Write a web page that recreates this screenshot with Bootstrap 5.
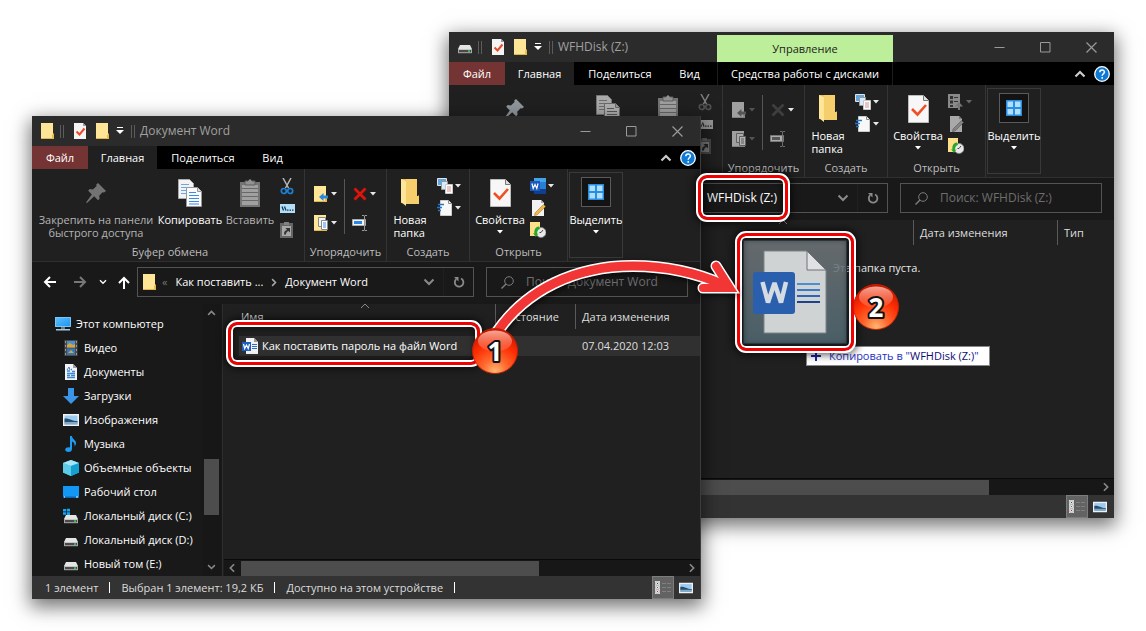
<!DOCTYPE html>
<html lang="ru">
<head>
<meta charset="utf-8">
<meta name="viewport" content="width=device-width, initial-scale=1">
<title>Проводник</title>
<link href="https://cdn.jsdelivr.net/npm/bootstrap@5.3.0/dist/css/bootstrap.min.css" rel="stylesheet">
<style>
  body { margin: 0; background: #fff; font: 11px/16px "Open Sans", "Noto Sans", sans-serif; color: #e8e8e8; }
  button { background: none; border: 0; padding: 0; color: inherit; font: inherit; }
  svg { display: block; flex: none; }
  .desktop { min-height: 100vh; overflow: hidden; }
  .win { background: #202020; box-shadow: 0 6px 18px 2px rgba(0,0,0,.55); }
  .win-front { left: 32px; top: 116px; width: 669px; border-right: 1px solid #3c3c3c; }
  .win-back { left: 449px; top: 32px; width: 665px; }
  .titlebar { height: 30px; background: #2b2b2b; }
  .quick { width: 268px; padding-left: 8px; color: #a0a0a0; font-size: 12px; }
  .bars { width: 4px; height: 13px; border: 1px solid #5c5c5c; border-width: 0 1px; }
  .ms4 { margin-left: 4px; }
  .ms5 { margin-left: 5px; }
  .ms7 { margin-left: 7px; }
  .ms8 { margin-left: 8px; }
  .manage { width: 176px; height: 27px; background: #bdee99; color: #222; }
  .sysbtn { width: 46px; height: 30px; }
  .tabs { height: 23px; background: #000; color: #fff; }
  .tabs button { height: 23px; }
  .t-file { width: 56px; background: #753434; }
  .t-home { width: 69px; background: #202020; }
  .t-share { width: 92px; }
  .t-view { width: 47px; }
  .t-disk { width: 176px; margin-left: 4px; border: 1px solid #1c1c1c !important; border-width: 0 1px !important; }
  .ribbon { height: 93px; border-bottom: 1px solid #303030; background: #202020; }
  .grp { height: 92px; border-right: 1px solid #343434; }
  .grp-body { height: 75px; }
  .g1 { width: 273px; padding-left: 4px; } .g2 { width: 82px; } .g3 { width: 83px; } .g4 { width: 98px; }
  .win-back .g1 { width: 274px; padding-left: 5px; }
  .cap { color: #bdbdbd; }
  .big { line-height: 13px; padding-top: 8px; color: #fff; white-space: nowrap; display: flex; flex-direction: column; align-items: center; }
  .big .pic { height: 36px; padding-top: 2px; display: block; }
  .w120 { width: 120px; } .w68 { width: 68px; } .w52 { width: 52px; } .w22 { width: 22px; } .w46 { width: 46px; } .w60 { width: 60px; }
  .dim { color: #b4b4b4; }
  .small3 { padding-top: 6px; } .small3 > * { height: 22px; }
  .small2 { padding-top: 10px; } .small2 > * { height: 29px; }
  .small2 button, .small3 button { display: flex; align-items: center; gap: 2px; }
  .vline { width: 1px; height: 55px; margin-top: 10px; background: #555; }
  .selbox { width: 54px; height: 86px; margin: 3px 0 0 1px; border: 1px solid #393939; line-height: 13px; color: #fff; display: flex; flex-direction: column; align-items: center; }
  .selpic { width: 30px; height: 30px; margin: 4px 0 6px; border: 1px solid #5a5a5a; background: #131313; display: flex; align-items: center; justify-content: center; }
  .off { filter: grayscale(1) brightness(.7); }
  .navrow { height: 42px; background: #191919; padding: 5px 12px 7px 0; }
  .navrow .box { height: 30px; border: 1px solid #535353; }
  .navbtns { width: 105px; padding-left: 11px; }
  .srch { width: 202px; margin-left: 12px; padding-left: 14px; }
  .srch input { background: none; border: 0; outline: 0; padding: 0; width: 165px; margin-left: 12px; color: #6e6e6e; font: inherit; font-size: 12px; }
  .srch input::placeholder { color: #6e6e6e; opacity: 1; }
  .addr { color: #fff; }
  .win-back .addr { font-size: 12px; }
  .disk-name { margin-right: 60px; }
  .addr-end { border-left: 1px solid #202020; width: 30px; height: 28px; }
  .side { flex: none; width: 171px; background: #191919; padding: 8px 0 0 23px; color: #fff; }
  .side li { height: 24px; white-space: nowrap; }
  .side li a { color: #fff; text-decoration: none; display: flex; align-items: center; height: 24px; gap: 5px; }
  .side li.sub { padding-left: 8px; }
  .vscroll { flex: none; width: 18px; padding-left: 1px; background: #171717; }
  .vthumb { width: 15px; height: 56px; background: #4d4d4d; margin-top: auto; }
  .split { flex: none; width: 3px; background: linear-gradient(90deg,#191919 1px,#2d2d2d 1px 2px,#202020 2px); }
  .pane { min-width: 0; }
  .files { width: 100%; table-layout: fixed; color: #dedede; }
  .files th { font-weight: 400; height: 32px; vertical-align: top; padding: 0; }
  .files th > div { height: 25px; padding-top: 5px; padding-left: 6px; border-left: 1px solid #5a5a5a; }
  .files th:first-child > div { border: 0; padding-left: 2px; }
  .files td { height: 20px; padding: 0 0 0 7px; background: #303030; line-height: 20px; white-space: nowrap; }
  .files td:first-child { padding-left: 3px; }
  .hscroll { height: 17px; background: #171717; border-top: 1px solid #0a0a0a; }
  .hthumb { height: 15px; background: #4d4d4d; }
  .status { height: 23px; background: #333; color: #dcdcdc; padding-left: 13px; padding-right: 2px; }
  .tick { width: 1px; height: 11px; background: #fff; margin: 0 11px; }
  .view-on { width: 22px; height: 23px; background: #636363; border: 1px solid #7c7c7c !important; }
  .view-pic { width: 24px; height: 23px; }
  .frame { border: 3px solid #f00000; border-radius: 9px; outline: 2px solid #fff; box-shadow: inset 0 0 0 2px #fff, inset 0 0 6px 3px rgba(0,0,0,.5), 0 0 9px 3px rgba(0,0,0,.75); pointer-events: none; }
  .f-file { left: 228px; top: 322px; width: 252px; height: 43px; z-index: 5; }
  .f-addr { left: 698px; top: 175px; width: 90px; height: 45px; z-index: 5; }
  .f-drop { left: 737px; top: 233px; width: 117px; height: 118px; z-index: 5; }
  .ghost { left: 743px; top: 240px; width: 104px; height: 104px; background: linear-gradient(rgba(110,116,119,.88), rgba(80,103,113,.88)); border: 1px solid #30424c; z-index: 2; }
  .tip { left: 806px; top: 346px; z-index: 3; height: 20px; background: #fff; border: 1px solid #888; color: #1c31c4; padding: 0 10px 0 4px; white-space: nowrap; }
  .tip b { font-weight: 400; color: #0d0d73; }
  .curve { left: 480px; top: 250px; z-index: 6; }
  .ball { width: 46px; height: 46px; z-index: 7; }
  .b1 { left: 472px; top: 328px; } .b2 { left: 853px; top: 284px; }
  .ball text { font: 700 26px "Noto Sans", "DejaVu Sans", sans-serif; fill: #fff; stroke: #111; stroke-width: 4px; paint-order: stroke; stroke-linejoin: round; }
</style>
<script src="https://cdn.jsdelivr.net/npm/bootstrap@5.3.0/dist/js/bootstrap.bundle.min.js"></script>
</head>
<body>
<svg width="0" height="0" class="position-absolute" aria-hidden="true">
  <defs>
    <radialGradient id="ballg" cx=".5" cy=".95" r=".9"><stop offset="0" stop-color="#ffb873"/><stop offset=".3" stop-color="#ff6a30"/><stop offset=".65" stop-color="#ff2f04"/><stop offset="1" stop-color="#c81500"/></radialGradient>
    <linearGradient id="shine" x2="0" y2="1"><stop offset="0" stop-color="#ffc0ae" stop-opacity=".85"/><stop offset="1" stop-color="#ff7a5a" stop-opacity=".35"/></linearGradient>
    <linearGradient id="scr" x2="1" y2="1"><stop offset="0" stop-color="#5cc4ff"/><stop offset="1" stop-color="#1d8ff0"/></linearGradient>
  </defs>
  <symbol id="folder" viewBox="0 0 16 16"><path d="M1 0h12v11h1v5H1z" fill="#f8d774"/><path d="M1 0h12v15H1z" fill="#ffe596"/><path d="M12 12l2-2v6h-2z" fill="#e9b94c"/><path d="M1 15h11v1H1z" fill="#e2b64c"/></symbol>
  <symbol id="pagecheck" viewBox="0 0 16 16"><path d="M2 0h9l3 3v13H2z" fill="#f4f4f4"/><path d="M11 0v3h3z" fill="#9a9a9a"/><path d="M4.500 8.500l3 3 5-6" fill="none" stroke="#ec4a26" stroke-width="2"/></symbol>
  <symbol id="drive" viewBox="0 0 16 16"><path d="M3 6h10l2 4H1z" fill="#e4e4e4"/><path d="M1 10h14v4H1z" fill="#4a4a4a"/><path d="M1 10h14v1H1z" fill="#c4c4c4"/><path d="M1 10h1v4H1zM14 10h1v4h-1z" fill="#aaa"/><path d="M1 13.200h14v1H1z" fill="#aaa"/><rect x="11" y="11.400" width="2" height="1.400" fill="#2be05a"/></symbol>
  <symbol id="drivec" viewBox="0 0 16 16"><use href="#drive" y="1"/><path d="M0 1h3v2.500H0zM3.700 .7H7v2.800H3.700zM0 4.200h3v2.500H0zM3.700 4.200H7V7H3.700z" fill="#12a5f5"/></symbol>
  <symbol id="down" viewBox="0 0 6 4"><path d="M0 0h6L3 3.500z" fill="currentColor"/></symbol>
  <symbol id="qdown" viewBox="0 0 8 8"><path d="M1 0h6v1H1zM0 3h8L4 7z" fill="#fff"/></symbol>
  <symbol id="min" viewBox="0 0 11 11"><path d="M0.500 5.500h10" stroke="#9a9a9a" fill="none"/></symbol>
  <symbol id="max" viewBox="0 0 11 11"><path d="M.5.500h9.500v9.500H.5z" stroke="#9a9a9a" fill="none"/></symbol>
  <symbol id="close" viewBox="0 0 11 11"><path d="M.5.500l10 10M10.500.500l-10 10" stroke="#9a9a9a" stroke-width="1.200" fill="none"/></symbol>
  <symbol id="up" viewBox="0 0 12 8"><path d="M1.500 6.500L6 2l4.500 4.500" stroke="currentColor" stroke-width="2.200" fill="none"/></symbol>
  <symbol id="caret" viewBox="0 0 10 6"><path d="M1 5l4-4 4 4" stroke="currentColor" fill="none"/></symbol>
  <symbol id="chev" viewBox="0 0 12 8"><path d="M1.500 1.500L6 6l4.500-4.500" stroke="currentColor" stroke-width="2" fill="none"/></symbol>
  <symbol id="right" viewBox="0 0 8 12"><path d="M1.500 1.500L6 6l-4.500 4.500" stroke="currentColor" stroke-width="2" fill="none"/></symbol>
  <symbol id="left" viewBox="0 0 8 12"><path d="M6.500 1.500L2 6l4.500 4.500" stroke="currentColor" stroke-width="2" fill="none"/></symbol>
  <symbol id="help" viewBox="0 0 16 16"><circle cx="8" cy="8" r="7.300" fill="#0f7ad6" stroke="#fff" stroke-width="1.300"/><path d="M5.800 6.300c0-3 4.600-3 4.600-.2 0 1.700-2.200 1.700-2.200 3.600M8.200 11v1.700" stroke="#fff" stroke-width="1.500" fill="none"/></symbol>
  <symbol id="pin" viewBox="0 0 20 20"><path d="M12 0l8 8-2 1.600-1.400-.4-3.400 3.600.4 3-1.600 1.400-3.800-3.900L1 20l-1-.6 5.800-8-3.600-3.700L3.700 6l3.200.5L10.600 3l-.4-1.500z" fill="currentColor"/></symbol>
  <symbol id="copy" viewBox="0 0 24 28"><path d="M.5.500h11l4 4v15H.5z" fill="#f3f3f3" stroke="#aaa"/><path d="M3 5.500h8M3 8.500h9M3 11.500h9M3 14.500h9" stroke="#6aa5ea"/><path d="M8.500 8.500h11l4 4v15h-15z" fill="#fbfbfb" stroke="#999"/><path d="M19.500 8.500v4h4" fill="#ddd" stroke="#999"/><path d="M11 13.500h7M11 16.500h10M11 19.500h10M11 22.500h10M11 25h10" stroke="#3b8be8"/></symbol>
  <symbol id="paste" viewBox="0 0 20 28"><path d="M0 3h20v25H0z" fill="#747474"/><path d="M2 6h16v20H2z" fill="#a0a0a0"/><path d="M2 9.500h16M2 13.500h16M2 17.500h16M2 21.500h16" stroke="#686868"/><path d="M5 2h3l2-2 2 2h3v4H5z" fill="#929292" stroke="#5e5e5e"/></symbol>
  <symbol id="cut" viewBox="0 0 14 17"><path d="M3 0l5.500 10M11 0L5.500 10" stroke="#b5b5b5" stroke-width="1.500" fill="none"/><circle cx="3.800" cy="13" r="2.500" fill="none" stroke="#1f7fd4" stroke-width="1.700"/><circle cx="10.200" cy="13" r="2.500" fill="none" stroke="#1f7fd4" stroke-width="1.700"/></symbol>
  <symbol id="path" viewBox="0 0 15 9"><path d="M0 0h15v9H0z" fill="#b4def6"/><path d="M2 2.500l1.500 4M4.500 2.500L6 6.500" stroke="#173b57" stroke-width="1.300"/><path d="M7 5.500h1.500v1.200H7zM9.500 5.500H11v1.200H9.500zM12 5.500h1.500v1.200H12z" fill="#173b57"/></symbol>
  <symbol id="pastelnk" viewBox="0 0 13 16"><path d="M0 1h13v15H0z" fill="#666"/><path d="M2 4h9v10H2z" fill="#a8a8a8"/><path d="M4 0h5v3H4z" fill="#808080"/><path d="M4 12.500c0-3 1-4 3-4.500L5.500 6H10v4.500L8.500 9C7 9.500 6 10.500 6 12.500z" fill="#333"/></symbol>
  <symbol id="moveto" viewBox="0 0 16 16"><use href="#folder"/><path d="M15 9.500h-4.500V7L6 11l4.500 4v-2.500H15z" fill="#2a87e0"/></symbol>
  <symbol id="copyto" viewBox="0 0 16 16"><use href="#folder"/><path d="M5.500 2.500h7v9h-7z" fill="#f4f4f4" stroke="#888"/><path d="M8.500 5.500h6v9h-6z" fill="#fff" stroke="#888"/><path d="M10 8h3M10 10h3M10 12h3" stroke="#3b8be8"/></symbol>
  <symbol id="del" viewBox="0 0 16 16"><path d="M2.500 2.500l11 11M13.500 2.500l-11 11" stroke="#e3120b" stroke-width="2.800" fill="none"/></symbol>
  <symbol id="ren" viewBox="0 0 16 16"><path d="M.5 4.500h13v6H.5z" fill="#f5f5f5" stroke="#aaa"/><path d="M2 6h8v3H2z" fill="#2c87e2"/><path d="M10 .5h2l.5.500.5-.5h2M10 15.500h2l.5-.5.500.5h2M12.500 1v14" stroke="#9a9a9a" fill="none"/></symbol>
  <symbol id="bigfolder" viewBox="0 0 18 28"><path d="M0 0h16v18l2-2v9H7L0 24z" fill="#e8be58"/><path d="M5 0h11v17h2v8H5z" fill="#f6cf6c"/><path d="M0 0l5 2v25l-5-4z" fill="#ffe597"/></symbol>
  <symbol id="newitem" viewBox="0 0 16 16"><path d="M.5.500h9v7h-9z" fill="#5ea6e0" stroke="#e4e4e4"/><path d="M4.500 3.500h6v8h-6z" fill="#d7ebfa" stroke="#999"/><path d="M8.500 6.500h7v9h-7z" fill="#fff" stroke="#c8c8c8"/><path d="M10 9h4M10 11h4M10 13h4" stroke="#d49090"/></symbol>
  <symbol id="access" viewBox="0 0 16 16"><path d="M3.500.5h8l3 3v12h-11z" fill="#f8f8f8" stroke="#ccc"/><path d="M11.500.5v3h3" fill="none" stroke="#888"/><path d="M1 4.500h6M0 7.500h5M1 10.500h3" stroke="#2277c9" stroke-width="1.500"/></symbol>
  <symbol id="bigcheck" viewBox="0 0 21 28"><path d="M.5.500h15l5 5v22H.5z" fill="#f7f7f7" stroke="#bcbcbc"/><path d="M15.500.5v5h5" fill="#ddd" stroke="#777"/><path d="M4 14l5.500 5.500L18 10" fill="none" stroke="#f04e23" stroke-width="2.600"/></symbol>
  <symbol id="wordapp" viewBox="0 0 16 16"><path d="M4 0h12v16H4z" fill="#2b7cd3"/><path d="M4 0h12v4H4z" fill="#41a5ee"/><path d="M4 11h12v5H4z" fill="#103f91"/><path d="M0 3h10v10H0z" fill="#185abd"/><path d="M2 5.500l1.200 5L5 6.500l1.800 4 1.200-5" stroke="#fff" stroke-width="1.200" fill="none"/></symbol>
  <symbol id="edit" viewBox="0 0 16 16"><path d="M2 0h9l3 3v13H2z" fill="#f2f2f2"/><path d="M11 0v3h3z" fill="#aaa"/><path d="M5 13l8.500-8.500 2 2L7 15l-2.500.500z" fill="#efb84c" stroke="#a87527" stroke-width=".6"/></symbol>
  <symbol id="hist" viewBox="0 0 16 16"><path d="M0 0h10v14H0z" fill="#ffe08a"/><circle cx="11" cy="10.500" r="5" fill="#e8e8e8" stroke="#888" stroke-width=".8"/><path d="M11 10.500l2-2.500M11 10.500H9.500" stroke="#444"/><path d="M9 4.500C5 5 4 8 4.500 11.500l-1.500-.5 2.800 4 2.700-3.500-1.500.2C7 9 8 7.500 10 7z" fill="#27a52c"/></symbol>
  <symbol id="openoff" viewBox="0 0 16 16"><path d="M0 0h12v14H0z" fill="#8a8a8a"/><path d="M2 2h3v3H2zM2 6.500h3v3H2zM2 11h3v2H2zM6 3h4v1H6zM6 7h4v1H6z" fill="#333"/><path d="M7 12.500l4-4.500 4 4.500h-3V16h-2v-3.500z" fill="#777"/></symbol>
  <symbol id="squares" viewBox="0 0 16 16"><path d="M0 0h16v16H0z" fill="#2b8de0"/><path d="M1.500 1.500h5.500v5.500H1.500zM9 1.500h5.500v5.500H9zM1.500 9h5.500v5.500H1.500zM9 9h5.500v5.500H9z" fill="#aee0fd"/></symbol>
  <symbol id="back" viewBox="0 0 13 12"><path d="M13 6H2M7 1L2 6l5 5" stroke="currentColor" stroke-width="2" fill="none"/></symbol>
  <symbol id="fwd" viewBox="0 0 13 12"><path d="M0 6h11M6 1l5 5-5 5" stroke="currentColor" stroke-width="2" fill="none"/></symbol>
  <symbol id="upto" viewBox="0 0 12 13"><path d="M6 13V2M1 7l5-5 5 5" stroke="currentColor" stroke-width="2" fill="none"/></symbol>
  <symbol id="refresh" viewBox="0 0 12 12"><path d="M3.200 3.200A4.300 4.300 0 1 0 8 2.500" stroke="#8a8a8a" stroke-width="1.800" fill="none"/><path d="M1 1h4.500v4.500z" fill="#8a8a8a"/></symbol>
  <symbol id="loupe" viewBox="0 0 13 13"><circle cx="8" cy="5" r="4.300" fill="none" stroke="#7c7c7c"/><path d="M5 8L.5 12.500" stroke="#7c7c7c" stroke-width="1.400"/></symbol>
  <symbol id="pc" viewBox="0 0 16 16"><path d="M0 1h16v10H0z" fill="url(#scr)"/><path d="M.5 1.500h15v9H.5z" fill="none" stroke="#7cc6f5"/><path d="M6 11h4v2H6z" fill="#777"/><path d="M1 13h14v1.500H1z" fill="#9ecbe6"/></symbol>
  <symbol id="video" viewBox="0 0 16 16"><path d="M1.500 0h13v16h-13z" fill="#4b4b4b"/><path d="M4 1h8v6.500H4z" fill="#4a8fd0"/><path d="M4 8.500h8V15H4z" fill="#3478bc"/><path d="M4 5l3-2 3 2 2-1v3.500H4zM5 13l3-3 3 3z" fill="#d6a53b"/><path d="M2 1h1v2H2zM2 5h1v2H2zM2 9h1v2H2zM2 13h1v2H2zM13 1h1v2h-1zM13 5h1v2h-1zM13 9h1v2h-1zM13 13h1v2h-1z" fill="#999"/></symbol>
  <symbol id="docs" viewBox="0 0 16 16"><path d="M2 0h8l4 4v12H2z" fill="#f3f3f3"/><path d="M10 0v4h4z" fill="#a0a0a0"/><path d="M4 7h3M8 5.500h1M9 7.500h3M4 9.500h8M4 11.500h3M8 11.500h4M4 13.500h8" stroke="#3a87d9" stroke-width="1.300"/><path d="M4 6l2-3 1 3" stroke="#3a87d9" fill="none"/></symbol>
  <symbol id="dl" viewBox="0 0 16 16"><path d="M5 0h6v8h5l-8 8-8-8h5z" fill="#3b94e6"/></symbol>
  <symbol id="img" viewBox="0 0 16 16"><path d="M0 2h16v12H0z" fill="#f1f1f1"/><path d="M1.500 3.500h13v9h-13z" fill="#9ccbf2"/><path d="M1.500 6.500c5-.5 7 2.500 13 2.500v1.500h-13z" fill="#274e6c"/><path d="M1.500 10h13v2.500h-13z" fill="#7fa9c6"/></symbol>
  <symbol id="music" viewBox="0 0 16 16"><path d="M7 0h2c0 3 4 4 4 7 0 1.500-.7 2.500-1.500 3.500.5-2.500-.5-4-2.500-5V13c0 1.800-1.500 3-3.500 3S2 15 2.200 13.500C2.500 12 4.500 11 7 11.500z" fill="#1e9bf0"/></symbol>
  <symbol id="cube" viewBox="0 0 16 16"><path d="M8 0l8 3v9.500L8 16l-8-3.500V3z" fill="#3fc3ea"/><path d="M8 0l8 3-8 3-8-3z" fill="#a5e4f5"/><path d="M8 6l8-3v9.500L8 16z" fill="#12a0d3"/><path d="M0 3l8 3v10l-8-3.500z" fill="#5ccbe8"/></symbol>
  <symbol id="desk" viewBox="0 0 16 16"><path d="M0 2h16v12H0z" fill="#1397f4"/><path d="M0 12.500h16V14H0z" fill="#0b62b2"/><path d="M1 13h1M13 13h2" stroke="#fff"/></symbol>
  <symbol id="wordfile" viewBox="0 0 16 16"><path d="M4 0h8l4 4v12H4z" fill="#f2f2f2"/><path d="M12 0v4h4z" fill="#999"/><path d="M10 6.500h5M10 8.500h5M10 10.500h5" stroke="#2f6fc6"/><path d="M0 4h9v9H0z" fill="#1f5cbd"/><path d="M1.500 6l1.200 4.500L4.500 7l1.700 3.500L7.500 6" stroke="#fff" stroke-width="1.200" fill="none"/></symbol>
  <symbol id="list" viewBox="0 0 16 15"><path d="M0 1h5v13H0z" fill="#ddd"/><path d="M1 2h3v3H1zM1 6h3v3H1zM1 10h3v3H1z" fill="#fff" stroke="#888" stroke-width=".5"/><path d="M2 3h1v1H2z" fill="#444"/><path d="M2 7h1v1H2z" fill="#27c"/><path d="M2 11h1v1H2z" fill="#c22"/><path d="M7 3.500h4M12 3.500h4M7 7.500h4M12 7.500h4M7 11.500h4M12 11.500h4" stroke="#808080"/></symbol>
</svg>

<main class="desktop position-relative">

  <!-- Target window: disk Z: -->
  <section class="win win-back position-absolute" aria-label="WFHDisk (Z:)">
    <header class="titlebar d-flex">
      <div class="quick d-flex align-items-center">
        <svg width="16" height="16"><use href="#drive"/></svg><span class="bars ms5"></span>
        <svg class="ms8" width="16" height="16"><use href="#pagecheck"/></svg>
        <svg class="ms7" width="16" height="16"><use href="#folder"/></svg>
        <svg class="ms5" width="8" height="8"><use href="#qdown"/></svg>
        <span class="bars ms7"></span><span class="ms5">WFHDisk (Z:)</span>
      </div>
      <div class="manage align-self-end d-flex align-items-center justify-content-center">Управление</div>
      <div class="ms-auto d-flex">
        <button class="sysbtn d-flex align-items-center justify-content-center" aria-label="Свернуть"><svg width="11" height="11"><use href="#min"/></svg></button>
        <button class="sysbtn d-flex align-items-center justify-content-center" aria-label="Развернуть"><svg width="11" height="11"><use href="#max"/></svg></button>
        <button class="sysbtn d-flex align-items-center justify-content-center" aria-label="Закрыть"><svg width="11" height="11"><use href="#close"/></svg></button>
      </div>
    </header>
    <nav class="tabs d-flex align-items-center">
      <button class="t-file">Файл</button><button class="t-home">Главная</button><button class="t-share">Поделиться</button><button class="t-view">Вид</button><button class="t-disk">Средства работы с дисками</button>
      <button class="ms-auto me-2" aria-label="Свернуть ленту"><svg width="12" height="8" color="#ccc"><use href="#up"/></svg></button>
      <button class="me-1 d-flex align-items-center" aria-label="Справка"><svg width="16" height="16"><use href="#help"/></svg></button>
    </nav>
    <div class="ribbon d-flex">
      <div class="grp g1">
        <div class="grp-body d-flex">
          <button class="big w120" aria-label="Закрепить"><span class="pic"><svg class="mt-1" width="20" height="20" color="#8f979e"><use href="#pin"/></svg></span></button>
          <button class="big w68" aria-label="Копировать"><span class="pic off"><svg width="24" height="28"><use href="#copy"/></svg></span></button>
          <button class="big w52" aria-label="Вставить"><span class="pic"><svg width="20" height="28"><use href="#paste"/></svg></span></button>
          <div class="small3 w22 off"><button class="mx-1" aria-label="Вырезать"><svg width="14" height="17"><use href="#cut"/></svg></button><button class="mx-1" aria-label="Скопировать путь"><svg width="15" height="9"><use href="#path"/></svg></button><button class="mx-1" aria-label="Вставить ярлык"><svg width="13" height="16"><use href="#pastelnk"/></svg></button></div>
        </div>
      </div>
      <div class="grp g2">
        <div class="grp-body d-flex">
          <div class="small2 ms8 off"><button aria-label="Переместить в"><svg width="16" height="16"><use href="#moveto"/></svg><svg width="6" height="4" color="#777"><use href="#down"/></svg></button><button aria-label="Копировать в"><svg width="16" height="16"><use href="#copyto"/></svg><svg width="6" height="4" color="#777"><use href="#down"/></svg></button></div>
          <div class="vline ms7"></div>
          <div class="small2 ms7"><button aria-label="Удалить"><svg width="16" height="16" style="filter:grayscale(1)"><use href="#del"/></svg><svg width="6" height="4"><use href="#down"/></svg></button><button aria-label="Переименовать"><svg class="off" width="16" height="16"><use href="#ren"/></svg></button></div>
        </div>
        <div class="cap text-center">Упорядочить</div>
      </div>
      <div class="grp g3">
        <div class="grp-body d-flex">
          <button class="big w46"><span class="pic"><svg width="18" height="28"><use href="#bigfolder"/></svg></span><span class="text-start">Новая<br>папка</span></button>
          <div class="small3 ms4"><button aria-label="Создать элемент"><svg width="16" height="16"><use href="#newitem"/></svg><svg width="6" height="4"><use href="#down"/></svg></button><button aria-label="Простой доступ"><svg width="16" height="16"><use href="#access"/></svg><svg width="6" height="4"><use href="#down"/></svg></button></div>
        </div>
        <div class="cap text-center">Создать</div>
      </div>
      <div class="grp g4">
        <div class="grp-body d-flex">
          <button class="big w60"><span class="pic"><svg width="21" height="28"><use href="#bigcheck"/></svg></span>Свойства<svg class="mt-1" width="6" height="4"><use href="#down"/></svg></button>
          <div class="small3"><button class="dim" aria-label="Открыть"><svg width="16" height="16"><use href="#openoff"/></svg><svg width="6" height="4" color="#666"><use href="#down"/></svg></button><button aria-label="Изменить"><svg class="off" width="16" height="16"><use href="#edit"/></svg></button><button aria-label="Журнал"><svg width="16" height="16"><use href="#hist"/></svg></button></div>
        </div>
        <div class="cap text-center">Открыть</div>
      </div>
      <button class="selbox"><span class="selpic"><svg width="16" height="16"><use href="#squares"/></svg></span>Выделить<svg class="mt-1" width="6" height="4"><use href="#down"/></svg></button>
    </div>
    <div class="navrow d-flex">
      <div class="navbtns"></div>
      <div class="box addr flex-grow-1 d-flex align-items-center justify-content-end">
        <a href="#" class="disk-name text-white text-decoration-none">WFHDisk (Z:)</a>
        <button class="me-1" aria-label="История адресов"><svg width="12" height="8" color="#8a8a8a"><use href="#chev"/></svg></button>
        <button class="addr-end d-flex align-items-center justify-content-center ms-1" aria-label="Обновить"><svg width="12" height="12"><use href="#refresh"/></svg></button>
      </div>
      <div class="box srch d-flex align-items-center"><svg width="13" height="13"><use href="#loupe"/></svg><input type="search" aria-label="Поиск на диске" placeholder="Поиск: WFHDisk (Z:)"></div>
    </div>
    <div class="position-relative" style="height:258px">
      <div class="d-flex justify-content-end">
        <table class="files" style="width:457px"><colgroup><col style="width:256px"><col style="width:144px"><col></colgroup>
          <thead><tr><th aria-label="Имя"><div class="position-relative"><svg class="position-absolute" style="left:121px;top:-1px" width="10" height="6" color="#888"><use href="#caret"/></svg></div></th><th scope="col"><div>Дата изменения</div></th><th scope="col"><div>Тип</div></th></tr></thead></table>
      </div>
      <div class="position-absolute" style="left:384px;top:40px">Эта папка пуста.</div>
    </div>
    <div class="hscroll d-flex align-items-center justify-content-between">
      <div class="hthumb" style="width:540px"></div><svg class="me-1" width="8" height="10" color="#888"><use href="#right"/></svg>
    </div>
    <footer class="status d-flex align-items-center justify-content-end">
      <button class="view-on d-flex align-items-center justify-content-center" aria-label="Таблица"><svg width="16" height="15"><use href="#list"/></svg></button>
      <button class="view-pic d-flex align-items-center justify-content-center" aria-label="Крупные значки"><svg width="14" height="14"><use href="#img"/></svg></button>
    </footer>
  </section>

  <!-- Source window: folder with the document -->
  <section class="win win-front position-absolute" aria-label="Документ Word">
    <header class="titlebar d-flex">
      <div class="quick d-flex align-items-center">
        <svg width="16" height="16"><use href="#folder"/></svg><span class="bars ms4"></span>
        <svg class="ms8" width="16" height="16"><use href="#pagecheck"/></svg>
        <svg class="ms7" width="16" height="16"><use href="#folder"/></svg>
        <svg class="ms5" width="8" height="8"><use href="#qdown"/></svg>
        <span class="bars ms7"></span><span class="ms5">Документ Word</span>
      </div>
      <div class="ms-auto d-flex">
        <button class="sysbtn d-flex align-items-center justify-content-center" aria-label="Свернуть"><svg width="11" height="11"><use href="#min"/></svg></button>
        <button class="sysbtn d-flex align-items-center justify-content-center" aria-label="Развернуть"><svg width="11" height="11"><use href="#max"/></svg></button>
        <button class="sysbtn d-flex align-items-center justify-content-center" aria-label="Закрыть"><svg width="11" height="11"><use href="#close"/></svg></button>
      </div>
    </header>
    <nav class="tabs d-flex align-items-center">
      <button class="t-file">Файл</button><button class="t-home">Главная</button><button class="t-share">Поделиться</button><button class="t-view">Вид</button>
      <button class="ms-auto me-2" aria-label="Свернуть ленту"><svg width="12" height="8" color="#ccc"><use href="#up"/></svg></button>
      <button class="me-1 d-flex align-items-center" aria-label="Справка"><svg width="16" height="16"><use href="#help"/></svg></button>
    </nav>
    <div class="ribbon d-flex">
      <div class="grp g1">
        <div class="grp-body d-flex">
          <button class="big w120 dim"><span class="pic"><svg class="mt-1" width="20" height="20" color="#737373"><use href="#pin"/></svg></span>Закрепить на панели<br>быстрого доступа</button>
          <button class="big w68"><span class="pic"><svg width="24" height="28"><use href="#copy"/></svg></span>Копировать</button>
          <button class="big w52 dim"><span class="pic"><svg width="20" height="28"><use href="#paste"/></svg></span>Вставить</button>
          <div class="small3 w22"><button class="mx-1" aria-label="Вырезать"><svg width="14" height="17"><use href="#cut"/></svg></button><button class="mx-1" aria-label="Скопировать путь"><svg width="15" height="9"><use href="#path"/></svg></button><button class="mx-1" aria-label="Вставить ярлык"><svg width="13" height="16"><use href="#pastelnk"/></svg></button></div>
        </div>
        <div class="cap text-center">Буфер обмена</div>
      </div>
      <div class="grp g2">
        <div class="grp-body d-flex">
          <div class="small2 ms8"><button aria-label="Переместить в"><svg width="16" height="16"><use href="#moveto"/></svg><svg width="6" height="4"><use href="#down"/></svg></button><button aria-label="Копировать в"><svg width="16" height="16"><use href="#copyto"/></svg><svg width="6" height="4"><use href="#down"/></svg></button></div>
          <div class="vline ms7"></div>
          <div class="small2 ms7"><button aria-label="Удалить"><svg width="16" height="16"><use href="#del"/></svg><svg width="6" height="4"><use href="#down"/></svg></button><button aria-label="Переименовать"><svg width="16" height="16"><use href="#ren"/></svg></button></div>
        </div>
        <div class="cap text-center">Упорядочить</div>
      </div>
      <div class="grp g3">
        <div class="grp-body d-flex">
          <button class="big w46"><span class="pic"><svg width="18" height="28"><use href="#bigfolder"/></svg></span><span class="text-start">Новая<br>папка</span></button>
          <div class="small3 ms4"><button aria-label="Создать элемент"><svg width="16" height="16"><use href="#newitem"/></svg><svg width="6" height="4"><use href="#down"/></svg></button><button aria-label="Простой доступ"><svg width="16" height="16"><use href="#access"/></svg><svg width="6" height="4"><use href="#down"/></svg></button></div>
        </div>
        <div class="cap text-center">Создать</div>
      </div>
      <div class="grp g4">
        <div class="grp-body d-flex">
          <button class="big w60"><span class="pic"><svg width="21" height="28"><use href="#bigcheck"/></svg></span>Свойства<svg class="mt-1" width="6" height="4"><use href="#down"/></svg></button>
          <div class="small3"><button aria-label="Открыть в Word"><svg width="16" height="16"><use href="#wordapp"/></svg><svg width="6" height="4"><use href="#down"/></svg></button><button aria-label="Изменить"><svg width="16" height="16"><use href="#edit"/></svg></button><button aria-label="Журнал"><svg width="16" height="16"><use href="#hist"/></svg></button></div>
        </div>
        <div class="cap text-center">Открыть</div>
      </div>
      <button class="selbox"><span class="selpic"><svg width="16" height="16"><use href="#squares"/></svg></span>Выделить<svg class="mt-1" width="6" height="4"><use href="#down"/></svg></button>
    </div>
    <div class="navrow d-flex">
      <div class="navbtns d-flex align-items-center text-white">
        <button aria-label="Назад"><svg width="13" height="12"><use href="#back"/></svg></button>
        <button aria-label="Вперёд" style="color:#777;margin-left:18px"><svg width="13" height="12"><use href="#fwd"/></svg></button>
        <button aria-label="Последние" style="margin-left:12px"><svg width="8" height="6"><use href="#chev"/></svg></button>
        <button aria-label="Вверх" style="margin-left:11px"><svg width="12" height="13"><use href="#upto"/></svg></button>
      </div>
      <div class="box addr flex-grow-1 d-flex align-items-center">
        <svg class="ms-1" width="16" height="16"><use href="#folder"/></svg>
        <span style="color:#777" class="ms4">«</span>
        <a href="#" class="text-white text-decoration-none ms8">Как поставить ...</a>
        <svg class="ms8" width="6" height="9" color="#aaa"><use href="#right"/></svg>
        <a href="#" class="text-white text-decoration-none ms8">Документ Word</a>
        <button class="ms-auto me-1" aria-label="История адресов"><svg width="12" height="8" color="#8a8a8a"><use href="#chev"/></svg></button>
        <button class="addr-end d-flex align-items-center justify-content-center ms-1" aria-label="Обновить"><svg width="12" height="12"><use href="#refresh"/></svg></button>
      </div>
      <div class="box srch d-flex align-items-center"><svg width="13" height="13"><use href="#loupe"/></svg><input type="search" aria-label="Поиск в папке" placeholder="Поиск: Документ Word"></div>
    </div>
    <div class="d-flex">
      <ul class="side list-unstyled mb-0">
        <li><a href="#"><svg width="16" height="16"><use href="#pc"/></svg>Этот компьютер</a></li>
        <li class="sub"><a href="#"><svg width="16" height="16"><use href="#video"/></svg>Видео</a></li>
        <li class="sub"><a href="#"><svg width="16" height="16"><use href="#docs"/></svg>Документы</a></li>
        <li class="sub"><a href="#"><svg width="16" height="16"><use href="#dl"/></svg>Загрузки</a></li>
        <li class="sub"><a href="#"><svg width="16" height="16"><use href="#img"/></svg>Изображения</a></li>
        <li class="sub"><a href="#"><svg width="16" height="16"><use href="#music"/></svg>Музыка</a></li>
        <li class="sub"><a href="#"><svg width="16" height="16"><use href="#cube"/></svg>Объемные объекты</a></li>
        <li class="sub"><a href="#"><svg width="16" height="16"><use href="#desk"/></svg>Рабочий стол</a></li>
        <li class="sub"><a href="#"><svg width="16" height="16"><use href="#drivec"/></svg>Локальный диск (C:)</a></li>
        <li class="sub"><a href="#"><svg width="16" height="16"><use href="#drive"/></svg>Локальный диск (D:)</a></li>
        <li class="sub"><a href="#"><svg width="16" height="16"><use href="#drive"/></svg>Новый том (E:)</a></li>
      </ul>
      <div class="vscroll d-flex flex-column">
        <svg width="9" height="8" color="#888" style="margin:5px 0 0 3px"><use href="#up"/></svg>
        <div class="vthumb"></div>
        <svg width="9" height="8" color="#888" style="margin:48px 0 5px 3px"><use href="#chev"/></svg>
      </div>
      <div class="split"></div>
      <div class="pane flex-grow-1 d-flex flex-column">
        <div style="padding-left:15px">
          <table class="files"><colgroup><col><col style="width:80px"><col style="width:125px"></colgroup>
            <thead><tr><th scope="col"><div class="position-relative">Имя<svg class="position-absolute" style="left:121px;top:-1px" width="10" height="6" color="#888"><use href="#caret"/></svg></div></th><th scope="col"><div>Состояние</div></th><th scope="col"><div>Дата изменения</div></th></tr></thead>
            <tbody><tr><td class="text-white"><div class="d-flex align-items-center gap-1"><svg width="16" height="16"><use href="#wordfile"/></svg>Как поставить пароль на файл Word</div></td><td></td><td>07.04.2020 12:03</td></tr></tbody>
          </table>
        </div>
        <div class="hscroll mt-auto d-flex align-items-center">
          <svg class="ms-1" width="8" height="10" color="#888"><use href="#left"/></svg><div class="hthumb ms5" style="width:298px"></div><svg class="ms-auto me-1" width="8" height="10" color="#888"><use href="#right"/></svg>
        </div>
      </div>
    </div>
    <footer class="status d-flex align-items-center">
      <span>1 элемент</span><span class="tick"></span><span>Выбран 1 элемент: 19,2 КБ</span><span class="tick"></span><span>Доступно на этом устройстве</span><span class="tick"></span>
      <button class="view-on d-flex align-items-center justify-content-center ms-auto" aria-label="Таблица"><svg width="16" height="15"><use href="#list"/></svg></button>
      <button class="view-pic d-flex align-items-center justify-content-center" aria-label="Крупные значки"><svg width="14" height="14"><use href="#img"/></svg></button>
    </footer>
  </section>

  <!-- Dragged file and its drop hint -->
  <div class="ghost position-absolute">
    <svg width="102" height="102" viewBox="0 0 102 102">
      <path d="M20 10h43l19 19v63H20z" fill="#d0d3d4" stroke="#7c8588"/><path d="M63 10v19h19z" fill="#dfe1e2" stroke="#6c7376"/>
      <path d="M53 43h23" stroke="#4a90d0" stroke-width="2"/><path d="M53 49h23" stroke="#3f78c4" stroke-width="2"/><path d="M53 55h23" stroke="#2d62b4" stroke-width="2"/><path d="M53 61h23" stroke="#1f4388" stroke-width="2"/>
      <rect x="9" y="31" width="42" height="42" rx="3" fill="#2a5fae"/><path d="M18.500 41L24 61.500 30.500 42 37 61.500 42 41" fill="none" stroke="#d5dbe2" stroke-width="4.500" stroke-linejoin="bevel"/>
    </svg>
  </div>
  <div class="tip position-absolute d-flex align-items-center"><svg width="10" height="10" class="me-2"><path d="M5 0v10M0 5h10" stroke="#14269e" stroke-width="2"/></svg><span>Копировать в "<b>WFHDisk (Z:)</b>"</span></div>

  <!-- Callouts of the two steps -->
  <div class="frame f-file position-absolute"></div>
  <div class="frame f-addr position-absolute"></div>
  <div class="frame f-drop position-absolute"></div>
  <svg class="curve position-absolute" width="270" height="90" viewBox="480 250 270 90" style="filter:drop-shadow(0 2px 3px rgba(0,0,0,.7))">
    <g fill="none" stroke-linecap="round">
      <g stroke="#fff" stroke-width="12"><path d="M497 332C526 290 575 266 633 266C667 266 697 273 724 285"/><path d="M716 266L730 288L703 288" stroke-width="11" stroke-miterlimit="8"/></g>
      <g stroke="#f23535" stroke-width="9"><path d="M497 332C526 290 575 266 633 266C667 266 697 273 724 285"/><path d="M716 266L730 288L703 288" stroke-width="8" stroke-miterlimit="8"/></g>
    </g>
  </svg>
  <svg class="ball b1 position-absolute" viewBox="0 0 46 46"><circle cx="23" cy="23" r="22.500" fill="url(#ballg)" stroke="#c42000" stroke-width="1"/><ellipse cx="23" cy="13" rx="17" ry="10.500" fill="url(#shine)"/><text x="23" y="33" text-anchor="middle">1</text></svg>
  <svg class="ball b2 position-absolute" viewBox="0 0 46 46"><circle cx="23" cy="23" r="22.500" fill="url(#ballg)" stroke="#c42000" stroke-width="1"/><ellipse cx="23" cy="13" rx="17" ry="10.500" fill="url(#shine)"/><text x="23" y="33" text-anchor="middle">2</text></svg>
</main>
</body>
</html>
